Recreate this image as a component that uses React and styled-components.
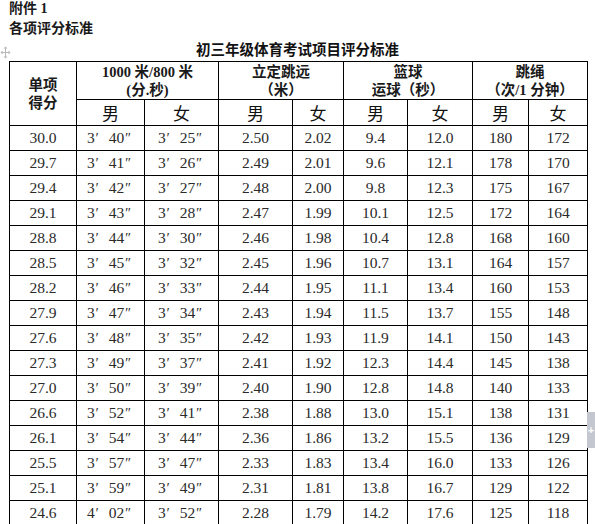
import React from 'react'
import styled, { createGlobalStyle } from 'styled-components'

const GlobalStyle = createGlobalStyle`
    html, body {
        margin: 0;
        padding: 0;
        background: #fff;
    }
    body {
        font-family: "Liberation Serif", "Noto Sans CJK SC", serif;
        color: #111;
    }
`

const Page = styled.div`
    position: relative;
    width: 595px;
    height: 524px;
    overflow: hidden;
    padding-left: 9px;
    box-sizing: border-box;
`
const Note = styled.p`
    margin: 0;
    font-size: 14px;
    font-weight: bold;
    line-height: ${props => props.lh}px;
    font-family: "Liberation Serif", "Noto Sans CJK SC", serif;
    color: #1a1a1a;
`
const Title = styled.h1`
    width: 577px;
    margin: 0;
    text-align: center;
    font-size: 14.5px;
    line-height: 22px;
    font-weight: bold;
    font-family: "Liberation Serif", "Noto Sans CJK SC", serif;
    color: #111;
`
const Table = styled.table`
    border-collapse: collapse;
    table-layout: fixed;
    width: 578px;
    border: 1px solid #000;
`
const HeadRow = styled.tr`
    height: ${props => props.h}px;
`
const HeadCell = styled.th`
    border: 1px solid #000;
    padding: 0;
    font-size: 14.5px;
    line-height: 18px;
    font-weight: bold;
    text-align: center;
    vertical-align: middle;
    color: #1a1a1a;
    font-family: "Liberation Serif", "Noto Sans CJK SC", serif;
`
const SexCell = styled.th`
    border: 1px solid #000;
    padding: 0;
    font-size: 17px;
    font-weight: normal;
    text-align: center;
    vertical-align: middle;
    color: #111;
    font-family: "Noto Sans CJK SC", serif;
`
const DataRow = styled.tr`
    height: 25px;
`
const Cell = styled.td`
    border: 1px solid #000;
    padding: 0;
    font-size: 15.5px;
    line-height: 22px;
    text-align: center;
    vertical-align: middle;
    color: #2a2a2a;
    white-space: nowrap;
    font-family: "Liberation Serif", "Noto Sans CJK SC", serif;
`
const Mark = styled.span`
    display: inline-block;
    width: ${props => props.w}px;
    text-align: left;
    font-size: 14px;
    font-style: italic;
`
const MoveHandle = styled.svg`
    position: absolute;
    left: 0;
    top: 46px;
`
const SideTab = styled.div`
    position: absolute;
    right: 0;
    top: 412px;
    width: 8px;
    height: 36px;
    background: #c4c7d0;
    display: flex;
    align-items: center;
    justify-content: center;
    color: #fff;
    font-size: 11px;
    font-family: "Liberation Sans", sans-serif;
    font-weight: bold;
`

const widths = [67, 68, 74, 74, 51, 64, 65, 56, 59]

// times as [minutes, seconds]
const rows = [
    ['30.0', [3, '40'], [3, '25'], '2.50', '2.02', '9.4', '12.0', '180', '172'],
    ['29.7', [3, '41'], [3, '26'], '2.49', '2.01', '9.6', '12.1', '178', '170'],
    ['29.4', [3, '42'], [3, '27'], '2.48', '2.00', '9.8', '12.3', '175', '167'],
    ['29.1', [3, '43'], [3, '28'], '2.47', '1.99', '10.1', '12.5', '172', '164'],
    ['28.8', [3, '44'], [3, '30'], '2.46', '1.98', '10.4', '12.8', '168', '160'],
    ['28.5', [3, '45'], [3, '32'], '2.45', '1.96', '10.7', '13.1', '164', '157'],
    ['28.2', [3, '46'], [3, '33'], '2.44', '1.95', '11.1', '13.4', '160', '153'],
    ['27.9', [3, '47'], [3, '34'], '2.43', '1.94', '11.5', '13.7', '155', '148'],
    ['27.6', [3, '48'], [3, '35'], '2.42', '1.93', '11.9', '14.1', '150', '143'],
    ['27.3', [3, '49'], [3, '37'], '2.41', '1.92', '12.3', '14.4', '145', '138'],
    ['27.0', [3, '50'], [3, '39'], '2.40', '1.90', '12.8', '14.8', '140', '133'],
    ['26.6', [3, '52'], [3, '41'], '2.38', '1.88', '13.0', '15.1', '138', '131'],
    ['26.1', [3, '54'], [3, '44'], '2.36', '1.86', '13.2', '15.5', '136', '129'],
    ['25.5', [3, '57'], [3, '47'], '2.33', '1.83', '13.4', '16.0', '133', '126'],
    ['25.1', [3, '59'], [3, '49'], '2.31', '1.81', '13.8', '16.7', '129', '122'],
    ['24.6', [4, '02'], [3, '52'], '2.28', '1.79', '14.2', '17.6', '125', '118'],
]

const events = [
    ['1000 米/800 米', '(分.秒)'],
    ['立定跳远', '（米）'],
    ['篮球', '运球（秒）'],
    ['跳绳', '（次/1 分钟）'],
]

function Value({ v }) {
    if (Array.isArray(v)) {
        return (
            <>
                {v[0]}<Mark w={14}>′</Mark>{v[1]}<Mark w={10}>″</Mark>
            </>
        )
    }
    return v
}

export default function App() {
    return (
        <Page>
            <GlobalStyle />
            <MoveHandle width="11" height="13" viewBox="0 0 11 13">
                <path d="M5.5 1v11M1 6.5h9" stroke="#b8b8b8" strokeWidth="1" fill="none" />
                <path d="M5.5 0.5l-2 2h4zM5.5 12.5l-2-2h4zM0.5 6.5l2-2v4zM10.5 6.5l-2-2v4z" fill="#b8b8b8" />
            </MoveHandle>
            <Note lh={18}>附件 1</Note>
            <Note lh={21}>各项评分标准</Note>
            <Title>初三年级体育考试项目评分标准</Title>
            <Table>
                <colgroup>
                    {widths.map((w, i) => <col key={i} style={{ width: w }} />)}
                </colgroup>
                <thead>
                    <HeadRow h={38}>
                        <HeadCell rowSpan={2}>单项<br />得分</HeadCell>
                        {events.map(([a, b]) => (
                            <HeadCell key={a} colSpan={2}>{a}<br />{b}</HeadCell>
                        ))}
                    </HeadRow>
                    <HeadRow h={25}>
                        {events.map(([a]) => (
                            <React.Fragment key={a}>
                                <SexCell>男</SexCell>
                                <SexCell>女</SexCell>
                            </React.Fragment>
                        ))}
                    </HeadRow>
                </thead>
                <tbody>
                    {rows.map(r => (
                        <DataRow key={r[0]}>
                            {r.map((v, i) => <Cell key={i}><Value v={v} /></Cell>)}
                        </DataRow>
                    ))}
                </tbody>
            </Table>
            <SideTab>+</SideTab>
        </Page>
    )
}
